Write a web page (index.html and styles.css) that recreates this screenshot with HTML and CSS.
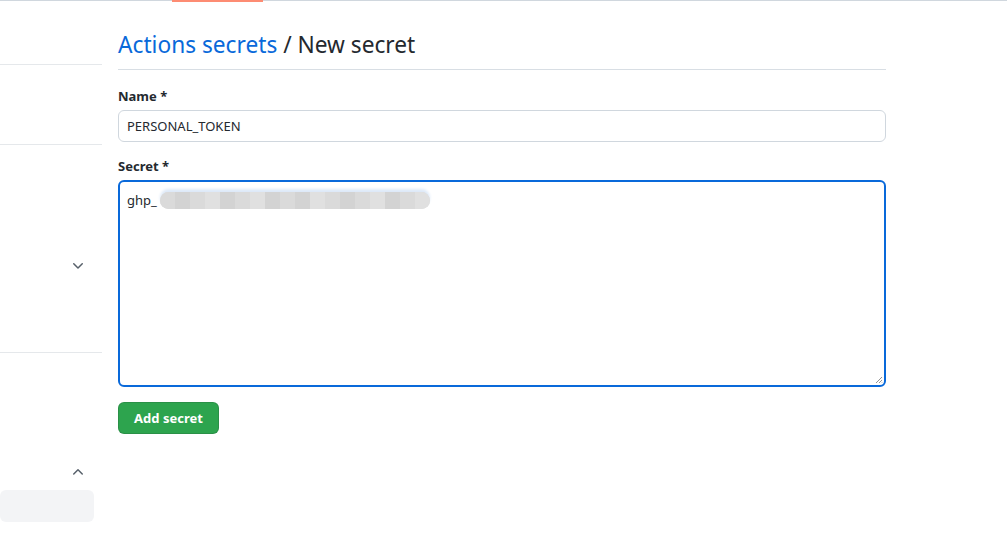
FILE: index.html
```html
<!DOCTYPE html>
<html>
<head>
<meta charset="utf-8">
<link rel="stylesheet" href="styles.css">
</head>
<body>
<div class="topbar"><span class="tab-active"></span></div>
<div class="layout">
  <aside class="sidebar">
    <div class="side-sec s1"></div>
    <div class="side-sec s2"></div>
    <div class="side-sec s3">
      <svg class="chev" width="16" height="16" viewBox="0 0 16 16"><path d="M12.78 5.22a.75.75 0 0 1 0 1.06l-4.25 4.25a.75.75 0 0 1-1.06 0L3.22 6.28a.75.75 0 0 1 1.06-1.06L8 8.94l3.72-3.72a.75.75 0 0 1 1.06 0Z" fill="#57606a"/></svg>
    </div>
    <div class="side-sec s4">
      <svg class="chev" width="16" height="16" viewBox="0 0 16 16"><path d="M3.22 10.53a.75.75 0 0 1 0-1.06l4.25-4.25a.75.75 0 0 1 1.06 0l4.25 4.25a.75.75 0 0 1-1.06 1.060L8 6.81 4.28 10.53a.75.75 0 0 1-1.06 0Z" fill="#57606a"/></svg>
      <div class="side-item"></div>
    </div>
  </aside>
  <main class="main">
    <h2 class="title"><a class="crumb">Actions secrets</a> / New secret</h2>
    <form class="form">
      <label class="label">Name *</label>
      <div class="input">PERSONAL_TOKEN</div>
      <label class="label l2">Secret *</label>
      <div class="textarea">
        <span class="val">ghp_</span><span class="blur"><span class="b1"></span><span class="b2"></span><span class="b1"></span><span class="b3"></span><span class="b2"></span><span class="b1"></span><span class="b3"></span><span class="b2"></span><span class="b1"></span><span class="b2"></span><span class="b3"></span><span class="b1"></span><span class="b2"></span><span class="b1"></span><span class="b3"></span><span class="b2"></span><span class="b1"></span><span class="b3"></span></span>
        <svg class="grip" width="8" height="8" viewBox="0 0 8 8"><path d="M7 1 1 7M7 4 4 7M7 6.5 6.5 7" stroke="#777" stroke-width="0.8"/></svg>
      </div>
      <button type="button" class="btn">Add secret</button>
    </form>
  </main>
</div>
</body>
</html>
```
FILE: styles.css
```css
* { box-sizing: border-box; }
body {
  margin: 0;
  background: #fff;
  font-family: "Noto Sans", "Open Sans", sans-serif;
  color: #24292f;
}
.topbar {
  height: 1px;
  background: #d0d7de;
  position: relative;
}
.tab-active {
  position: absolute;
  left: 172px;
  top: 0;
  width: 91px;
  height: 2px;
  background: #fd8c73;
}
.layout {
  display: flex;
  gap: 16px;
}
.sidebar {
  width: 102px;
  flex: none;
}
.side-sec { border-bottom: 1px solid #e5e8eb; position: relative; }
.s1 { height: 64px; }
.s2 { height: 80px; }
.s3 { height: 208px; display: flex; justify-content: flex-end; padding-top: 113px; padding-right: 16px; }
.s4 { border-bottom: none; padding-top: 111px; display: flex; flex-direction: column; align-items: flex-end; }
.s4 .chev { margin-right: 16px; }
.chev { display: block; }
.side-item {
  margin-top: 10px;
  width: 94px;
  height: 32px;
  background: #f3f4f6;
  border-radius: 6px;
  align-self: flex-start;
}
.main {
  width: 768px;
  padding-top: 28px;
}
.title {
  margin: 0;
  font-size: 22.7px;
  font-weight: 400;
  line-height: 32px;
  padding-bottom: 8px;
  border-bottom: 1px solid #d8dee4;
  color: #24292f;
}
.crumb { color: #0969da; text-decoration: none; }
.form { padding-top: 16px; display: flex; flex-direction: column; }
.label {
  font-size: 13px;
  font-weight: 700;
  line-height: 20px;
  margin-bottom: 4px;
}
.l2 { margin-top: 14px; margin-bottom: 4px; }
.input {
  height: 32px;
  border: 1px solid #d0d7de;
  border-radius: 6px;
  padding: 0 8px;
  font-size: 13px;
  line-height: 30px;
}
.textarea {
  height: 207px;
  border: 2px solid #0969da;
  border-radius: 6px;
  padding: 8px 7px;
  font-size: 13px;
  line-height: 20px;
  position: relative;
  display: flex;
  align-self: stretch;
  align-items: flex-start;
}
.val { color: #24292f; }
.blur {
  display: inline-flex;
  height: 17px;
  margin-top: 2px;
  margin-left: 3px;
  border-radius: 9px;
  overflow: hidden;
  background: #dcdcdc;
  box-shadow: 0 -3px 3px #dde9f8;
}
.blur span { width: 15px; height: 17px; }
.b1 { background: #dadada; }
.b2 { background: #d3d3d3; }
.b3 { background: #e0e0e0; }
.grip { position: absolute; right: 1px; bottom: 1px; }
.btn {
  margin-top: 15px;
  align-self: flex-start;
  width: 101px;
  height: 32px;
  background: #2da44e;
  color: #fff;
  border: 1px solid rgba(27,31,36,0.15);
  border-radius: 6px;
  font-family: inherit;
  font-size: 13px;
  font-weight: 700;
}
```
